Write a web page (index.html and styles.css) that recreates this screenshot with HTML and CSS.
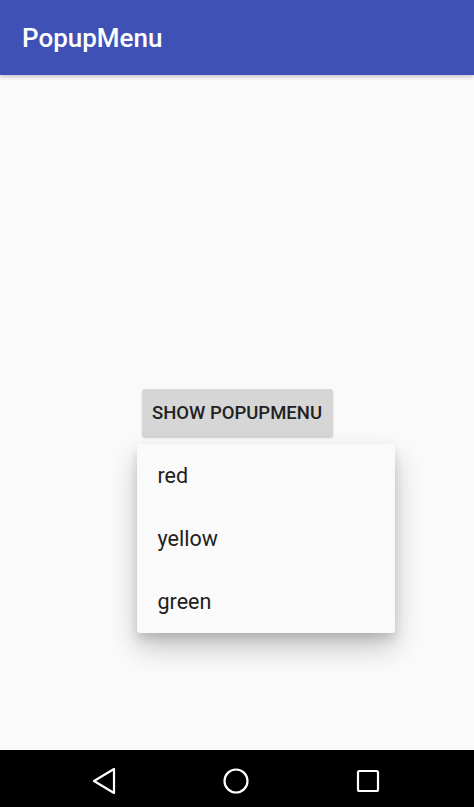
FILE: index.html
```html
<!DOCTYPE html>
<html lang="en">
<head>
  <meta charset="UTF-8" />
  <meta name="viewport" content="width=device-width, initial-scale=1.0" />
  <title>PopupMenu</title>
  <link rel="stylesheet" href="styles.css">
</head>
<body>
  <header class="app-bar">
    <h1>PopupMenu</h1>
  </header>

  <main class="contenido">
    <div class="ancla">
      <button class="boton">SHOW POPUPMENU</button>

      <!-- Menu emergente -->
      <ul class="popup">
        <li>red</li>
        <li>yellow</li>
        <li>green</li>
      </ul>
    </div>
  </main>

  <nav class="nav-bar">
    <svg width="26" height="26" viewBox="0 0 26 26">
      <path d="M23 1 L3 13 L23 25 Z" fill="none" stroke="#fff" stroke-width="2.2" stroke-linejoin="round"/>
    </svg>
    <svg width="26" height="26" viewBox="0 0 26 26">
      <circle cx="13" cy="13" r="11.5" fill="none" stroke="#fff" stroke-width="2.2"/>
    </svg>
    <svg width="26" height="26" viewBox="0 0 26 26">
      <rect x="3" y="3" width="20" height="20" rx="1.5" fill="none" stroke="#fff" stroke-width="2.2"/>
    </svg>
  </nav>
</body>
</html>
```

FILE: styles.css
```css
body {
  font-family: Roboto, "Noto Sans", sans-serif;
  background: #fafafa;
  margin: 0;
  padding: 0;
  height: 807px;
  display: flex;
  flex-direction: column;
}

.app-bar {
  background: #3f51b5;
  color: #fff;
  height: 75px;
  padding: 0 22px;
  display: flex;
  align-items: center;
  box-shadow: 0 2px 4px rgba(0,0,0,0.2);
  position: relative;
  z-index: 1;
}

.app-bar h1 {
  font-size: 26px;
  font-weight: 500;
  margin: 0;
}

.contenido {
  flex: 1;
  display: flex;
  justify-content: center;
  align-items: center;
}

.ancla {
  position: relative;
}

.boton {
  font-family: Roboto, sans-serif;
  font-size: 18.5px;
  font-weight: 500;
  color: #222;
  background: #d6d6d6;
  border: none;
  border-radius: 3px;
  width: 191px;
  height: 47px;
  padding: 0;
  box-shadow: 0 2px 2px rgba(0,0,0,0.18);
}

/* Menu emergente */
.popup {
  position: absolute;
  top: 55px;
  left: -5px;
  width: 258px;
  margin: 0;
  padding: 0;
  list-style: none;
  background: #fafafa;
  border-radius: 3px;
  box-shadow: 0 14px 28px rgba(0,0,0,0.22), 0 6px 10px rgba(0,0,0,0.12);
}

.popup li {
  height: 63px;
  padding: 0 21px;
  display: flex;
  align-items: center;
  font-size: 21.5px;
  color: #212121;
}

.nav-bar {
  background: #000;
  height: 57px;
  box-sizing: border-box;
  padding-top: 5px;
  display: flex;
  justify-content: center;
  align-items: center;
  gap: 106px;
  padding-right: 2px;
}
```
